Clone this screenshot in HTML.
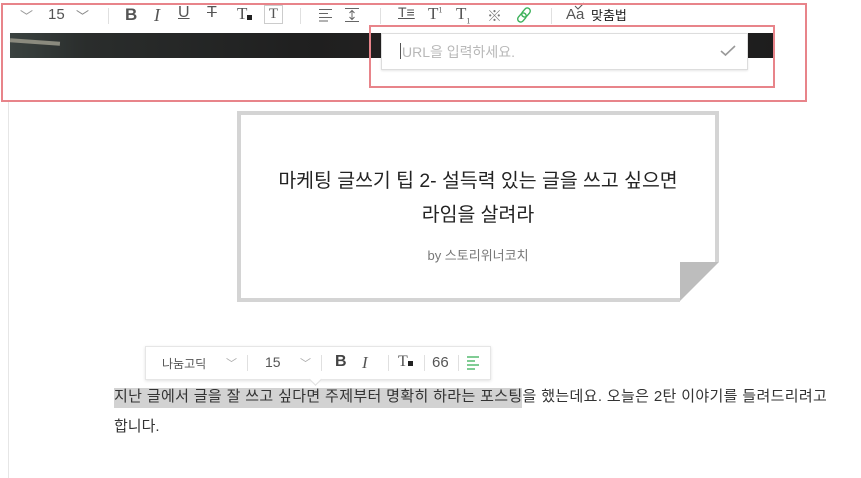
<!DOCTYPE html>
<html><head><meta charset="utf-8"><style>
*{margin:0;padding:0;box-sizing:border-box}
body{width:861px;height:478px;background:#fff;position:relative;overflow:hidden;font-family:"Liberation Sans","Noto Sans CJK KR",sans-serif;color:#333}
.a{position:absolute}
.tb{font-size:15px;color:#555;white-space:nowrap}
.sep{position:absolute;width:1px;background:#e0e0e0}
</style></head><body>
<div class="a" style="left:8px;top:100px;width:1px;height:378px;background:#e6e6e6"></div>
<div class="a" style="left:10px;top:33px;width:765px;height:25px;background:linear-gradient(90deg,#3a4240 0%,#2a2d2c 10%,#1f1f1f 40%,#262322 60%,#2b2624 75%,#1d1d1d 100%)"></div>
<div class="a" style="left:10px;top:40px;width:50px;height:4px;background:#8a8a7e;transform:rotate(4deg)"></div>
<!-- toolbar -->
<div class="a tb" style="left:20px;top:6px;font-size:13px;color:#999">﹀</div>
<div class="a tb" style="left:48px;top:6px;font-size:15px">15</div>
<div class="a tb" style="left:76px;top:6px;font-size:13px;color:#888">﹀</div>
<div class="sep" style="left:108px;top:8px;height:16px"></div>
<div class="a tb" style="left:125px;top:5px;font-weight:bold;font-size:17px">B</div>
<div class="a tb" style="left:154px;top:5px;font-style:italic;font-family:'Liberation Serif';font-size:18px">I</div>
<div class="a tb" style="left:178px;top:4px;text-decoration:underline;font-size:16px">U</div>
<div class="a tb" style="left:207px;top:4px;text-decoration:line-through;font-size:16px">T</div>
<div class="a tb" style="left:237px;top:4px;font-family:'Liberation Serif';font-size:17px">T<span style="display:inline-block;width:5px;height:5px;background:#222;vertical-align:-1px"></span></div>
<div class="a tb" style="left:264px;top:5px;width:19px;height:19px;border:1px solid #ccc;text-align:center;font-family:'Liberation Serif';font-size:15px;line-height:17px">T</div>
<div class="sep" style="left:300px;top:8px;height:16px"></div>
<svg class="a" style="left:319px;top:8px" width="14" height="14"><g stroke="#666" stroke-width="1"><line x1="0" y1="1.5" x2="13" y2="1.5"/><line x1="0" y1="5.5" x2="9" y2="5.5"/><line x1="0" y1="9.5" x2="13" y2="9.5"/><line x1="0" y1="13" x2="9" y2="13"/></g></svg>
<svg class="a" style="left:345px;top:7px" width="14" height="16"><g stroke="#666" stroke-width="1" fill="none"><line x1="0" y1="1.5" x2="14" y2="1.5"/><line x1="0" y1="14.5" x2="14" y2="14.5"/><line x1="7" y1="4" x2="7" y2="12"/><path d="M4.5 6 L7 3.5 L9.5 6 M4.5 10 L7 12.5 L9.5 10"/></g></svg>
<div class="sep" style="left:380px;top:8px;height:16px"></div>
<div class="a tb" style="left:398px;top:4px;font-size:14px;text-decoration:underline">T≡</div>
<div class="a tb" style="left:428px;top:4px;font-family:'Liberation Serif';font-size:17px">T<sup style="font-size:8px">1</sup></div>
<div class="a tb" style="left:456px;top:4px;font-family:'Liberation Serif';font-size:17px">T<sub style="font-size:8px">1</sub></div>
<div class="a tb" style="left:487px;top:5px;font-size:15px;color:#777">※</div>
<svg class="a" style="left:516px;top:6px" width="18" height="18"><g stroke="#3cb15a" stroke-width="1.4" fill="none"><rect x="7" y="1.5" width="6" height="10" rx="3" transform="rotate(40 10 6.5)"/><rect x="3" y="6.5" width="6" height="10" rx="3" transform="rotate(40 6 11.5)"/></g></svg>
<div class="sep" style="left:551px;top:8px;height:16px"></div>
<div class="a tb" style="left:566px;top:6px;font-size:15px">Aa</div>
<svg class="a" style="left:574px;top:2px" width="12" height="8"><path d="M1 4 L4 7 L10 1" stroke="#555" fill="none"/></svg>
<div class="a tb" style="left:591px;top:5px;font-size:13px;color:#222">맞춤법</div>
<!-- red boxes -->
<div class="a" style="left:1px;top:3px;width:806px;height:99px;border:2px solid #e8848a"></div>
<div class="a" style="left:369px;top:25px;width:406px;height:63px;border:2px solid #e8848a"></div>
<div class="a" style="left:381px;top:33px;width:367px;height:37px;background:#fff;border:1px solid #ddd;box-shadow:0 1px 2px rgba(0,0,0,.1)"></div>
<div class="a" style="left:400px;top:43px;width:1px;height:16px;background:#555"></div>
<div class="a tb" style="left:402px;top:42px;font-size:14px;color:#b8b8b8">URL을 입력하세요.</div>
<svg class="a" style="left:720px;top:45px" width="16" height="12"><path d="M1 6 L5.5 10 L15 1" stroke="#999" stroke-width="1.6" fill="none"/></svg>
<!-- card -->
<div class="a" style="left:237px;top:111px;width:482px;height:191px;border:4px solid #d4d4d4;background:#fff"></div>
<div class="a" style="left:680px;top:262px;width:40px;height:41px;background:#fff"></div>
<div class="a" style="left:680px;top:262px;width:0;height:0;border-style:solid;border-width:39px 39px 0 0;border-color:#bdbdbd transparent transparent transparent"></div>
<div class="a" style="left:237px;top:164px;width:482px;text-align:center;font-size:19.4px;line-height:34px;color:#222">마케팅 글쓰기 팁 2- 설득력 있는 글을 쓰고 싶으면<br>라임을 살려라</div>
<div class="a" style="left:237px;top:245px;width:482px;text-align:center;font-size:13px;color:#777">by 스토리위너코치</div>
<!-- floating toolbar -->
<div class="a" style="left:145px;top:346px;width:346px;height:34px;background:#fff;border:1px solid #e6e6e6;box-shadow:0 1px 3px rgba(0,0,0,.12)"></div>
<div class="a" style="left:311px;top:375px;width:9px;height:9px;background:#fff;transform:rotate(45deg);border-right:1px solid #e0e0e0;border-bottom:1px solid #e0e0e0"></div>
<div class="a tb" style="left:162px;top:355px;font-size:12px;color:#555">나눔고딕</div>
<div class="a tb" style="left:226px;top:355px;font-size:11px;color:#aaa">﹀</div>
<div class="sep" style="left:247px;top:355px;height:16px"></div>
<div class="a tb" style="left:265px;top:354px;font-size:14px">15</div>
<div class="a tb" style="left:300px;top:355px;font-size:11px;color:#aaa">﹀</div>
<div class="sep" style="left:321px;top:355px;height:16px"></div>
<div class="a tb" style="left:335px;top:353px;font-weight:bold;font-size:16px;color:#444">B</div>
<div class="a tb" style="left:362px;top:353px;font-style:italic;font-family:'Liberation Serif';font-size:17px">I</div>
<div class="sep" style="left:388px;top:355px;height:16px"></div>
<div class="a tb" style="left:398px;top:353px;font-family:'Liberation Serif';font-size:16px">T<span style="display:inline-block;width:5px;height:5px;background:#222"></span></div>
<div class="sep" style="left:424px;top:355px;height:16px"></div>
<div class="a tb" style="left:432px;top:354px;font-size:15px">66</div>
<div class="sep" style="left:458px;top:355px;height:16px"></div>
<svg class="a" style="left:467px;top:356px" width="13" height="15"><g stroke="#3cb15a" stroke-width="1.3"><line x1="0" y1="1" x2="12" y2="1"/><line x1="0" y1="5" x2="8" y2="5"/><line x1="0" y1="9" x2="12" y2="9"/><line x1="0" y1="13" x2="8" y2="13"/></g></svg>
<!-- paragraph -->
<div class="a" style="left:114px;top:388px;width:408px;height:20px;background:#d2d2d2"></div>
<div class="a" style="left:114px;top:386px;font-size:15px;letter-spacing:0.35px;line-height:22px;color:#333;white-space:nowrap">지난 글에서 글을 잘 쓰고 싶다면 주제부터 명확히 하라는 포스팅을 했는데요. 오늘은 2탄 이야기를 들려드리려고</div>
<div class="a" style="left:114px;top:416px;font-size:15px;line-height:22px;color:#333">합니다.</div>
</body></html>
